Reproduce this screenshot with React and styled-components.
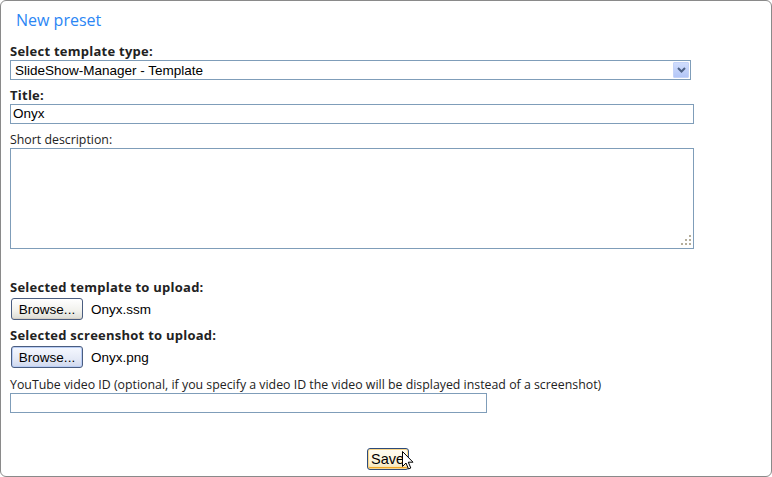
import React from 'react';
import styled, { createGlobalStyle } from 'styled-components';

const GlobalStyle = createGlobalStyle`
  html, body {
    margin: 0;
    padding: 0;
    background: #fff;
  }
  body {
    font-family: "Open Sans", "Noto Sans", sans-serif;
  }
`;

const Panel = styled.div`
  box-sizing: border-box;
  width: 772px;
  height: 477px;
  border: 1px solid #8a8a8a;
  border-radius: 6px;
  padding: 0 9px;
  display: flex;
  flex-direction: column;
  background: #fff;
`;

const Heading = styled.h2`
  margin: 8px 0 0 6px;
  height: 22px;
  line-height: 22px;
  font-size: 16px;
  font-weight: normal;
  color: #2b86f4;
`;

const Form = styled.form`
  display: flex;
  flex-direction: column;
  margin-top: 12px;
`;

const Label = styled.label`
  display: block;
  height: 17px;
  line-height: 17px;
  font-size: ${(p) => (p.$bold ? '13px' : '12.35px')};
  letter-spacing: ${(p) => (p.$bold ? '0.25px' : '0')};
  font-weight: ${(p) => (p.$bold ? 700 : 400)};
  color: #222;
  margin-top: ${(p) => p.$top || 0}px;
  margin-bottom: ${(p) => p.$bottom || 0}px;
  white-space: nowrap;
`;

const fieldText = `
  font-family: "Liberation Sans", Arial, sans-serif;
  font-size: 13.5px;
  color: #000;
`;

const SelectBox = styled.div`
  ${fieldText}
  box-sizing: border-box;
  width: 681px;
  height: 20px;
  border: 1px solid #7f9db9;
  display: flex;
  align-items: center;
  padding: 0 1px 0 4px;
`;

const SelectValue = styled.span`
  flex: 1;
`;

const DropButton = styled.span`
  width: 16px;
  height: 16px;
  border-radius: 1px;
  background: linear-gradient(#d0ddfd, #b3c6f7);
  border: 1px solid #c4d3f8;
  box-sizing: border-box;
  display: flex;
  align-items: center;
  justify-content: center;
`;

const TextInput = styled.div`
  ${fieldText}
  box-sizing: border-box;
  width: ${(p) => p.$w}px;
  height: ${(p) => p.$h || 20}px;
  border: 1px solid #7f9db9;
  padding: 1px 2px;
  line-height: 16px;
  position: relative;
`;

const Grip = styled.svg`
  position: absolute;
  right: 2px;
  bottom: 3px;
`;

const FileRow = styled.div`
  display: flex;
  align-items: center;
  gap: 8px;
  padding-left: 1px;
`;

const Button = styled.button`
  ${fieldText}
  box-sizing: border-box;
  width: 72px;
  height: 22px;
  padding: 0;
  border: 1px solid #4a5d80;
  border-radius: 3px;
  background: ${(p) =>
    p.$hover
      ? 'linear-gradient(#f5f8ff, #e4e9f6 60%, #cfd8ee)'
      : 'linear-gradient(#ffffff, #f1f1ec 60%, #dcdcd4)'};
  box-shadow: ${(p) =>
    p.$hover ? 'inset 0 0 0 1px #b9cdf5' : 'inset 0 -1px 0 #d6d0c5'};
  cursor: default;
`;

const FileName = styled.span`
  ${fieldText}
`;

const SaveRow = styled.div`
  display: flex;
  justify-content: center;
  margin-top: 34px;
  padding-left: 3px;
`;

const SaveWrap = styled.div`
  position: relative;
`;

const SaveButton = styled.button`
  ${fieldText}
  font-size: 14.5px;
  box-sizing: border-box;
  width: 42px;
  height: 22px;
  padding: 0;
  border: 1px solid #2d4b7a;
  border-radius: 3px;
  background: linear-gradient(#fffdf2, #fbf3d7 70%, #f3dfa6);
  box-shadow: inset 0 0 0 1px #f9d68a, inset 0 -2px 0 #f1a829;
`;

const Cursor = styled.svg`
  position: absolute;
  left: 35px;
  top: 4px;
`;

export default function App() {
  return (
    <>
      <GlobalStyle />
      <Panel>
        <Heading>New preset</Heading>
        <Form>
          <Label $bold>Select template type:</Label>
          <SelectBox>
            <SelectValue>SlideShow-Manager - Template</SelectValue>
            <DropButton>
              <svg width="9" height="6" viewBox="0 0 9 6">
                <path d="M1 1 L4.5 4.5 L8 1" fill="none" stroke="#4d6185" strokeWidth="2" />
              </svg>
            </DropButton>
          </SelectBox>

          <Label $bold $top={7}>Title:</Label>
          <TextInput $w={684}>Onyx</TextInput>

          <Label $top={7}>Short description:</Label>
          <TextInput $w={684} $h={101}>
            <Grip width="10" height="10" viewBox="0 0 10 10">
              <g fill="#b5ae9b">
                <rect x="8" y="0" width="2" height="2" />
                <rect x="4" y="4" width="2" height="2" />
                <rect x="8" y="4" width="2" height="2" />
                <rect x="0" y="8" width="2" height="2" />
                <rect x="4" y="8" width="2" height="2" />
                <rect x="8" y="8" width="2" height="2" />
              </g>
            </Grip>
          </TextInput>

          <Label $bold $top={30} $bottom={2}>Selected template to upload:</Label>
          <FileRow>
            <Button type="button">Browse...</Button>
            <FileName>Onyx.ssm</FileName>
          </FileRow>

          <Label $bold $top={7} $bottom={2}>Selected screenshot to upload:</Label>
          <FileRow>
            <Button type="button" $hover>Browse...</Button>
            <FileName>Onyx.png</FileName>
          </FileRow>

          <Label $top={8}>
            YouTube video ID (optional, if you specify a video ID the video will be displayed instead of a screenshot)
          </Label>
          <TextInput $w={477} />

          <SaveRow>
            <SaveWrap>
              <SaveButton type="button">Save</SaveButton>
              <Cursor width="12" height="20" viewBox="0 0 12 20">
                <path
                  d="M0.5 0.5 L0.5 15.5 L4 12 L6.5 18 L8.8 17 L6.3 11.2 L11 11.2 Z"
                  fill="#fff"
                  stroke="#000"
                  strokeWidth="1"
                  strokeLinejoin="miter"
                />
              </Cursor>
            </SaveWrap>
          </SaveRow>
        </Form>
      </Panel>
    </>
  );
}
